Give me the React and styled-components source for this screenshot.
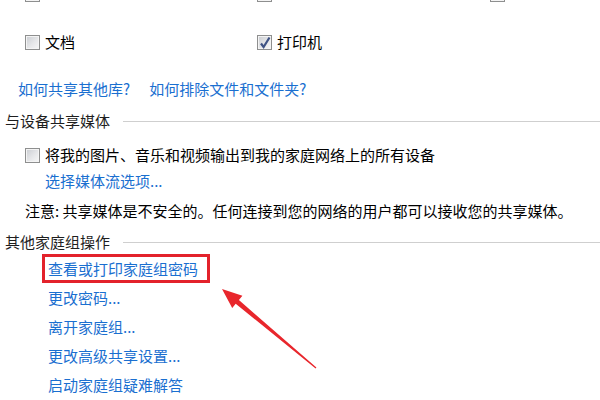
import styled, { createGlobalStyle } from 'styled-components';

const GlobalStyle = createGlobalStyle`
  html, body {
    margin: 0;
    padding: 0;
    background: #ffffff;
  }
  body {
    font-family: "Noto Sans CJK SC", "Microsoft YaHei", sans-serif;
    font-size: 15px;
    color: #000;
    overflow: hidden;
  }
`;

const Page = styled.div`
  position: relative;
  width: 600px;
  height: 400px;
  overflow: hidden;
`;

const ShareGrid = styled.div`
  display: grid;
  grid-template-columns: 232px 233px 1fr;
  grid-auto-rows: 48px;
  margin-top: -30px;
  padding-left: 25px;
`;

const CheckItem = styled.div`
  display: flex;
  align-items: center;
  gap: 5px;
  height: ${p => p.$h ? `${p.$h}px` : 'auto'};
  margin-top: ${p => p.$mt || 0}px;
  line-height: 20px;
  white-space: nowrap;
`;

const Box = styled.span`
  position: relative;
  box-sizing: border-box;
  width: 15px;
  height: 15px;
  flex: none;
  border: 1px solid #8e8f8f;
  background: linear-gradient(135deg, #c9ccd1 0%, #e6e7e9 55%, #f7f7f7 100%);
  box-shadow: inset 0 0 0 1px #f4f4f4;

  svg {
    position: absolute;
    left: 1px;
    top: 0px;
  }
`;

const Label = styled.span`
  margin-bottom: ${p => p.$top ? '6px' : '0'};
`;

const LinksRow = styled.div`
  display: flex;
  gap: 19px;
  padding-left: 18px;
  margin-top: 13px;
  line-height: 20px;
`;

const Link = styled.a`
  color: #1a6fd0;
  text-decoration: none;
  cursor: pointer;
`;

const SectionHeader = styled.div`
  display: flex;
  align-items: center;
  padding-left: 5px;
  margin-top: ${p => p.$mt}px;
  height: 20px;
  line-height: 20px;
  color: #1e1e1e;

  &::after {
    content: '';
    flex: 1;
    height: 1px;
    margin-left: 13px;
    background: #cfcfcf;
  }
`;

const Indent = styled.div`
  padding-left: 25px;
`;

const SubLink = styled.div`
  padding-left: 20px;
  margin-top: 6px;
  line-height: 20px;
`;

const Note = styled.div`
  padding-left: 25px;
  margin-top: 10px;
  line-height: 20px;
  white-space: nowrap;
`;

const LinkList = styled.div`
  display: flex;
  flex-direction: column;
  align-items: flex-start;
  padding-left: 48px;
  margin-top: 2px;
`;

const LinkItem = styled.div`
  line-height: 29px;
  height: 29px;
`;

const Highlight = styled.span`
  display: inline-block;
  border: 3px solid #e3222b;
  line-height: 23px;
  margin-left: -6px;
  padding: 0 9px 0 3px;
`;

const Arrow = styled.svg`
  position: absolute;
  left: 210px;
  top: 280px;
  pointer-events: none;
`;

function Checkbox({ checked }) {
  return (
    <Box>
      {checked && (
        <svg width="12" height="13" viewBox="0 0 12 13">
          <path d="M2 7.5 L4.6 11 L10.5 1.5" fill="none" stroke="#3f5384" strokeWidth="2.2" />
        </svg>
      )}
    </Box>
  );
}

const libs = [
  { label: '图片', checked: false, top: true },
  { label: '音乐', checked: false, top: true },
  { label: '视频', checked: false, top: true },
  { label: '文档', checked: false },
  { label: '打印机', checked: true },
];

const actions = ['更改密码...', '离开家庭组...', '更改高级共享设置...', '启动家庭组疑难解答'];

export default function App() {
  return (
    <Page>
      <GlobalStyle />
      <ShareGrid>
        {libs.map(l => (
          <CheckItem key={l.label}>
            <Checkbox checked={l.checked} />
            <Label $top={l.top}>{l.label}</Label>
          </CheckItem>
        ))}
      </ShareGrid>

      <LinksRow>
        <Link>如何共享其他库?</Link>
        <Link>如何排除文件和文件夹?</Link>
      </LinksRow>

      <SectionHeader $mt={12}>与设备共享媒体</SectionHeader>
      <Indent>
        <CheckItem $h={20} $mt={14}>
          <Checkbox />
          <span>将我的图片、音乐和视频输出到我的家庭网络上的所有设备</span>
        </CheckItem>
        <SubLink>
          <Link>选择媒体流选项...</Link>
        </SubLink>
      </Indent>
      <Note>注意: 共享媒体是不安全的。任何连接到您的网络的用户都可以接收您的共享媒体。</Note>

      <SectionHeader $mt={11}>其他家庭组操作</SectionHeader>
      <LinkList>
        <LinkItem>
          <Highlight>
            <Link>查看或打印家庭组密码</Link>
          </Highlight>
        </LinkItem>
        {actions.map(a => (
          <LinkItem key={a}>
            <Link>{a}</Link>
          </LinkItem>
        ))}
      </LinkList>

      <Arrow width="120" height="100" viewBox="0 0 120 100">
        <polygon
          points="12,9 32.4,15.8 28.9,20 106.4,87.6 105.6,88.4 25.7,23.8 22.2,28"
          fill="#e8262c"
        />
      </Arrow>
    </Page>
  );
}
